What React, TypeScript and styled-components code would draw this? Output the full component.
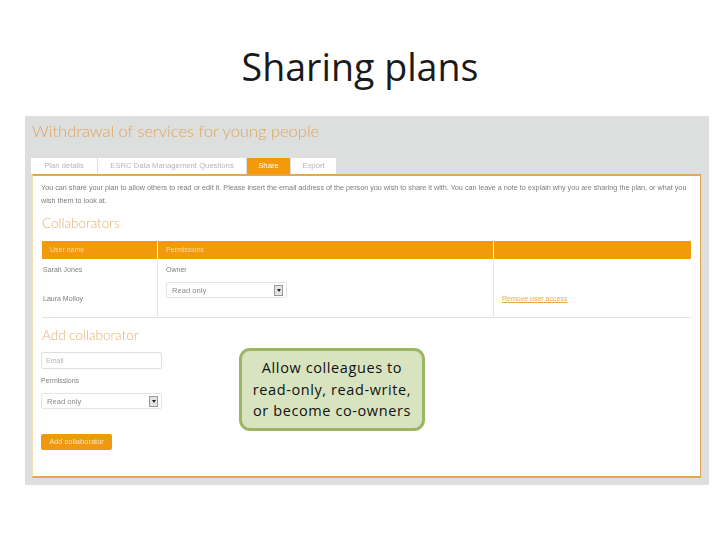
import React from 'react';
import styled, { createGlobalStyle } from 'styled-components';

const GlobalStyle = createGlobalStyle`
  html, body {
    margin: 0;
    padding: 0;
    background: #fff;
  }
`;

const Page = styled.div`
  width: 720px;
  height: 540px;
  overflow: hidden;
  display: flex;
  flex-direction: column;
  background: #fff;
`;

const SlideTitle = styled.h1`
  margin: 0;
  height: 116px;
  box-sizing: border-box;
  padding-top: 40px;
  text-align: center;
  font-family: 'Open Sans', sans-serif;
  font-weight: 400;
  font-size: 37.6px;
  line-height: 54px;
  color: #1a1a1a;
`;

const Shot = styled.div`
  margin-left: 25px;
  width: 684px;
  height: 369px;
  box-sizing: border-box;
  padding: 5px 8px 8px 7px;
  background: #dddfde;
  font-family: 'Liberation Sans', sans-serif;
  filter: blur(0.45px);
`;

const PlanTitle = styled.div`
  height: 37px;
  font-family: 'Lato', sans-serif;
  font-weight: 300;
  font-size: 16.5px;
  line-height: 20px;
  color: #dda45c;
`;

const Tabs = styled.div`
  display: flex;
  height: 16px;
  margin-left: -1px;
`;

const Tab = styled.div<{ $active?: boolean; $width: number }>`
  width: ${(p) => p.$width}px;
  margin-right: 1px;
  text-align: center;
  font-size: 7.7px;
  line-height: 16px;
  background: ${(p) => (p.$active ? '#f39a0c' : '#fff')};
  color: ${(p) => (p.$active ? '#fff' : '#b5b5b5')};
`;

const PlanBox = styled.div`
  width: 669px;
  height: 304px;
  box-sizing: border-box;
  border: 1px solid #e3a851;
  border-top-width: 2px;
  border-left-color: #f3dcb4;
  border-bottom-width: 2px;
  background: #fff;
  padding: 5px 9px 0;
`;

const Intro = styled.p`
  margin: 0 0 0 -1px;
  width: 655px;
  font-size: 7.23px;
  line-height: 13px;
  color: #7c7c7c;
`;

const SectionHeading = styled.div`
  font-family: 'Lato', sans-serif;
  font-weight: 300;
  font-size: 13.5px;
  line-height: 16px;
  color: #e2ae6e;
`;

const CollabHeading = styled(SectionHeading)`
  margin-top: 8px;
  height: 26px;
`;

const AddHeading = styled(SectionHeading)`
  margin-top: 9px;
  height: 25px;
`;

const Table = styled.div`
  width: 649px;
  display: grid;
  grid-template-columns: 115px 336px 198px;
  border-bottom: 1px solid #e3e3e3;
`;

const HeadCell = styled.div<{ $indent: number }>`
  height: 18px;
  background: #f39a0c;
  border-left: 1px solid #fff;
  box-sizing: border-box;
  padding-left: ${(p) => p.$indent}px;
  font-size: 7px;
  line-height: 18px;
  color: #f9dcae;
  &:first-child {
    border-left: none;
  }
`;

const BodyColumn = styled.div`
  height: 58px;
  box-sizing: border-box;
  border-left: 1px solid #e6e6e6;
  padding-left: 8px;
  font-size: 7px;
  color: #808080;
  display: flex;
  flex-direction: column;
`;

const NameColumn = styled(BodyColumn)`
  padding-left: 1px;
  border-left: none;
  line-height: 9px;
  padding-top: 6px;
  gap: 20px;
`;

const PermissionColumn = styled(BodyColumn)`
  line-height: 9px;
  padding-top: 6px;
`;

const ActionColumn = styled(BodyColumn)`
  justify-content: flex-end;
  padding-bottom: 14px;
`;

const RemoveLink = styled.a`
  color: #e8a74e;
  text-decoration: underline;
  font-size: 7px;
  line-height: 9px;
`;

const SelectBox = styled.div`
  width: 121px;
  height: 16px;
  box-sizing: border-box;
  border: 1px solid #e4e4e4;
  border-radius: 2px;
  display: flex;
  align-items: center;
  justify-content: space-between;
  padding: 0 3px 0 5px;
  font-size: 7.6px;
  color: #8a8a8a;
`;

const AddSelect = styled(SelectBox)`
  margin-left: -1px;
`;

const PermissionSelect = styled(SelectBox)`
  margin-top: 8px;
`;

const Arrow = styled.span`
  width: 9px;
  height: 11px;
  box-sizing: border-box;
  border: 1px solid #9a9a9a;
  background: #e4e4e4;
  display: flex;
  align-items: center;
  justify-content: center;
  &::after {
    content: '';
    border-left: 2px solid transparent;
    border-right: 2px solid transparent;
    border-top: 3px solid #222;
  }
`;

const EmailInput = styled.div`
  width: 121px;
  height: 17px;
  margin-left: -1px;
  box-sizing: border-box;
  border: 1px solid #dedede;
  border-radius: 2px;
  padding-left: 4px;
  font-size: 7px;
  line-height: 15px;
  color: #b4b4b4;
`;

const FieldLabel = styled.div`
  margin-top: 7px;
  margin-left: -1px;
  height: 17px;
  font-size: 7px;
  line-height: 9px;
  color: #808080;
`;

const AddButton = styled.div`
  margin-top: 25px;
  margin-left: -1px;
  width: 71px;
  height: 16px;
  border-radius: 2px;
  background: #f0980f;
  color: #fbe3bd;
  font-size: 7.5px;
  line-height: 16px;
  text-align: center;
`;

const Callout = styled.div`
  position: absolute;
  left: 239px;
  top: 348px;
  width: 186px;
  height: 83px;
  box-sizing: border-box;
  border: 3px solid #9bb565;
  border-radius: 11px;
  background: #d8e4bf;
  display: flex;
  align-items: center;
  justify-content: center;
  text-align: center;
  font-family: 'Open Sans', sans-serif;
  font-size: 14.5px;
  letter-spacing: 0.6px;
  line-height: 21.5px;
  color: #111;
`;

const App: React.FC = () => {
  return (
    <>
      <GlobalStyle />
      <Page>
        <SlideTitle>Sharing plans</SlideTitle>
        <Shot>
          <PlanTitle>Withdrawal of services for young people</PlanTitle>
          <Tabs>
            <Tab $width={66}>Plan details</Tab>
            <Tab $width={148}>ESRC Data Management Questions</Tab>
            <Tab $active $width={43}>Share</Tab>
            <Tab $width={45}>Export</Tab>
          </Tabs>
          <PlanBox>
            <Intro>
              You can share your plan to allow others to read or edit it. Please insert the email address of the person you wish to share it with. You can leave a note to explain why you are sharing the plan, or what you wish them to look at.
            </Intro>
            <CollabHeading>Collaborators</CollabHeading>
            <Table>
              <HeadCell $indent={8}>User name</HeadCell>
              <HeadCell $indent={8}>Permissions</HeadCell>
              <HeadCell $indent={8} />
              <NameColumn>
                <span>Sarah Jones</span>
                <span>Laura Molloy</span>
              </NameColumn>
              <PermissionColumn>
                <span>Owner</span>
                <PermissionSelect>
                  Read only
                  <Arrow />
                </PermissionSelect>
              </PermissionColumn>
              <ActionColumn>
                <RemoveLink>Remove user access</RemoveLink>
              </ActionColumn>
            </Table>
            <AddHeading>Add collaborator</AddHeading>
            <EmailInput>Email</EmailInput>
            <FieldLabel>Permissions</FieldLabel>
            <AddSelect>
              Read only
              <Arrow />
            </AddSelect>
            <AddButton>Add collaborator</AddButton>
          </PlanBox>
        </Shot>
        <Callout>
          <span>
            Allow colleagues to
            <br />
            read-only, read-write,
            <br />
            or become co-owners
          </span>
        </Callout>
      </Page>
    </>
  );
};

export default App;
